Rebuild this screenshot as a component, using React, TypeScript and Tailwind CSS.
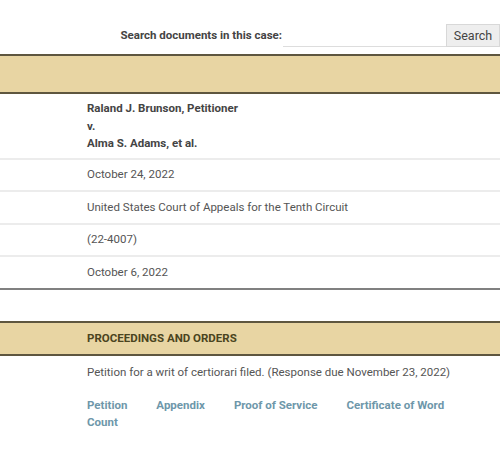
import React from "react";

export default function App() {
  const rows = ["October 24, 2022", "United States Court of Appeals for the Tenth Circuit", "(22-4007)"];
  return (
    <div className="w-[500px] h-[449px] bg-white overflow-hidden text-[11.5px] leading-[17px] text-[#555]" style={{ fontFamily: "Roboto, 'Liberation Sans', sans-serif" }}>
      <div className="h-[24px]" />
      <div className="flex items-end justify-end h-[23px]">
        <span className="font-bold text-[#444] mr-[1px] self-center">Search documents in this case:</span>
        <div className="w-[163px] h-[22px] border-b border-[#ddd]" />
        <button className="w-[54px] h-[23px] bg-[#eee] border border-[#d8d8d8] text-[#444] text-[12.5px] text-center">Search</button>
      </div>
      <div className="h-[7px]" />
      <div className="h-[40px] bg-[#e8d5a3] border-t-2 border-b-2 border-[#5e563f]" />
      <div className="border-b-2 border-[#ececec] pl-[87px] pt-[6px] pb-[5px] font-bold text-[#444] leading-[17.5px]">
        <div>Raland J. Brunson, Petitioner</div>
        <div>v.</div>
        <div>Alma S. Adams, et al.</div>
      </div>
      {rows.map((r) => (
        <div key={r} className="border-b-2 border-[#ececec] pl-[87px] h-[32.5px] flex items-center">
          {r}
        </div>
      ))}
      <div className="border-b-2 border-[#808080] pl-[87px] h-[33px] flex items-center">October 6, 2022</div>
      <div className="h-[31px]" />
      <div className="h-[35px] bg-[#e8d5a3] border-t-2 border-b-2 border-[#5e563f] pl-[87px] flex items-center font-bold text-[#4a4420]">
        PROCEEDINGS AND ORDERS
      </div>
      <div className="pl-[87px] pt-[8px] w-[470px]">
        <div>Petition for a writ of certiorari filed. (Response due November 23, 2022)</div>
        <div className="mt-[16px] font-bold text-[#6e97aa]">
          <div className="flex">
            <a className="mr-[29px]">Petition</a>
            <a className="mr-[29px]">Appendix</a>
            <a className="mr-[29px]">Proof of Service</a>
            <a>Certificate of Word</a>
          </div>
          <div>
            <a>Count</a>
          </div>
        </div>
      </div>
    </div>
  );
}
